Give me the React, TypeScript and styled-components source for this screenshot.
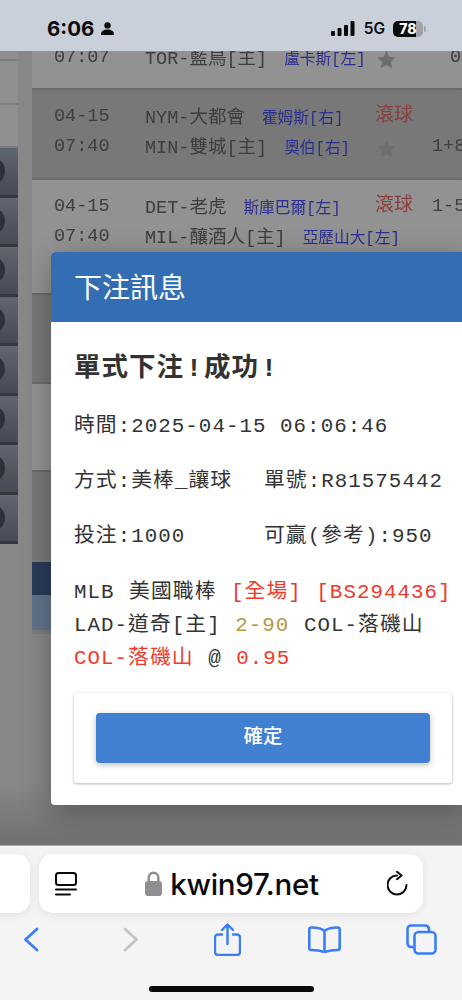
import styled, { createGlobalStyle } from 'styled-components';

const GlobalStyle = createGlobalStyle`
  html, body { margin: 0; padding: 0; background: #f4f4f4; }
  * { box-sizing: border-box; }
`;

const MONO = `"Liberation Mono", "Noto Sans CJK TC", monospace`;

const Screen = styled.div`
  width: 462px;
  height: 1000px;
  display: flex;
  flex-direction: column;
  overflow: hidden;
`;

const StatusBar = styled.div`
  height: 51px;
  flex: none;
  background: #c9d0d9;
  display: flex;
  align-items: center;
  padding: 6px 39px 0 47px;
  color: #0a0a0a;
  font-family: Inter, "Liberation Sans", sans-serif;
`;

const Clock = styled.span`
  font-size: 20.5px;
  font-weight: 700;
  margin-right: 7px;
`;

const StatusRight = styled.div`
  margin-left: auto;
  display: flex;
  align-items: center;
`;

const Net = styled.span`
  font-size: 15.5px;
  font-weight: 600;
  margin: 0 8px 0 9px;
`;

const Battery = styled.div`
  width: 30px;
  height: 16px;
  border-radius: 5px;
  background: linear-gradient(90deg, #0a0a0a 0 78%, #9fa3a9 78%);
  color: #fff;
  font-size: 14px;
  font-weight: 800;
  line-height: 16px;
  text-align: center;
  position: relative;

  &::after {
    content: '';
    position: absolute;
    right: -3px;
    top: 5px;
    width: 2px;
    height: 6px;
    border-radius: 0 2px 2px 0;
    background: #9fa3a9;
  }
`;

const Viewport = styled.div`
  flex: 1;
  position: relative;
  overflow: hidden;
  background: #eaeaea;
`;

const Page = styled.div`
  display: flex;
  align-items: flex-start;
  filter: blur(0.4px);
`;

const Sidebar = styled.div`
  width: 18px;
  flex: none;
  margin-right: 14px;
`;

const SideLink = styled.div<{ $h: number }>`
  height: ${({ $h }) => $h}px;
  background: #f6f6f6;
  border-bottom: 2px solid #d6d6d6;
`;

const SideButton = styled.div`
  height: 49.5px;
  background: linear-gradient(180deg, #a6b0bf, #76808f);
  border-bottom: 3px solid #59616d;
  display: flex;
  align-items: center;
  overflow: hidden;
`;

const SideDot = styled.span`
  width: 28px;
  height: 28px;
  flex: none;
  margin-left: -23px;
  border-radius: 50%;
  background: #4e5662;
`;

const Main = styled.div`
  flex: 1;
  min-width: 0;
`;

const Row = styled.div<{ $h: number; $dark?: boolean; $end?: boolean; $flat?: boolean }>`
  height: ${({ $h }) => $h}px;
  background: ${({ $dark }) => ($dark ? '#cfcfcf' : '#fbfbfb')};
  border-top: ${({ $flat }) => ($flat ? '0' : '2px solid #b8b8b8')};
  padding: ${({ $end }) => ($end ? '0 0 14px 22px' : '14px 0 0 22px')};
  display: flex;
  flex-direction: column;
  justify-content: ${({ $end }) => ($end ? 'flex-end' : 'flex-start')};
  font-family: ${MONO};
  font-size: 18.5px;
  color: #6a6a6a;
`;

const Line = styled.div`
  display: grid;
  grid-template-columns: 91px 230px 57px 1fr;
  height: 29.5px;
  line-height: 29.5px;
  white-space: nowrap;
`;

const Time = styled.span`
  margin-top: -2px;
`;

const Match = styled.span`
  display: flex;
  align-items: baseline;
  gap: 17px;
`;

const Pitcher = styled.span`
  font-size: 15.7px;
  color: #4a50f5;
`;

const Live = styled.span`
  font-size: 19px;
  margin-top: -2px;
  color: #f06a6a;
`;

const Star = styled.svg`
  margin: 5px 0 0 2px;
`;

const Score = styled.span<{ $inset?: number }>`
  margin-top: -2px;
  padding-left: ${({ $inset }) => $inset ?? 0}px;
`;

const Band = styled.div<{ $h: number; $color: string }>`
  height: ${({ $h }) => $h}px;
  background: ${({ $color }) => $color};
`;

const Backdrop = styled.div`
  position: absolute;
  inset: 0;
  background: linear-gradient(180deg, rgba(0, 0, 0, 0.42) 92%, rgba(0, 0, 0, 0.52));
`;

const Modal = styled.div`
  position: absolute;
  top: 201px;
  left: 51px;
  right: -10px;
  background: #fff;
  border-radius: 4px;
  overflow: hidden;
  box-shadow: 0 8px 30px rgba(0, 0, 0, 0.3);
`;

const ModalHeader = styled.div`
  height: 70px;
  background: #346eb2;
  color: #fff;
  padding: 0 0 2px 23px;
  font-family: "Noto Sans CJK TC", sans-serif;
  font-size: 28px;
  line-height: 68px;
`;

const ModalBody = styled.div`
  padding: 25px 0 22px 23px;
  font-family: ${MONO};
  color: #333;
`;

const Title = styled.div`
  font-size: 26.5px;
  font-weight: 700;
  letter-spacing: 1px;
  line-height: 44px;
  margin-bottom: 8px;
`;

const Bang = styled.span`
  margin: 0 1px 0 2px;
`;

const Field = styled.div`
  display: grid;
  grid-template-columns: 190px 1fr;
  height: 55px;
  font-size: 20.8px;
  letter-spacing: 1.05px;
  line-height: 55px;
  white-space: nowrap;
`;

const Details = styled.div`
  margin-top: 12px;
  font-size: 20.8px;
  letter-spacing: 1.05px;
  word-spacing: 1px;
  line-height: 33px;
  white-space: nowrap;
`;

const Red = styled.span`
  color: #f0392b;
`;

const Gold = styled.span`
  color: #b8963e;
`;

const Card = styled.div`
  width: 378px;
  margin-top: 18px;
  padding: 20px 22px;
  background: #fff;
  border-radius: 3px;
  box-shadow: 0 1px 3px rgba(0, 0, 0, 0.3);
`;

const ConfirmButton = styled.button`
  width: 334px;
  height: 50px;
  display: block;
  border: 0;
  padding: 0 0 8px;
  border-radius: 4px;
  background: #4180d0;
  color: #fff;
  font-family: "Noto Sans CJK TC", sans-serif;
  font-size: 19.5px;
  font-weight: 500;
  box-shadow: 0 2px 6px rgba(0, 0, 0, 0.25);
`;

const Toolbar = styled.div`
  height: 155px;
  flex: none;
  background: #f4f4f4;
  border-top: 1px solid #ababab;
  padding-top: 8px;
  display: flex;
  flex-direction: column;
`;

const TabStrip = styled.div`
  display: flex;
  gap: 9px;
  margin-left: -30px;
`;

const SidePill = styled.div`
  width: 60px;
  height: 59px;
  flex: none;
  border-radius: 14px;
  background: #fff;
  box-shadow: 0 2px 10px rgba(0, 0, 0, 0.08);
`;

const AddressPill = styled.div`
  width: 384px;
  height: 59px;
  flex: none;
  border-radius: 14px;
  background: #fff;
  box-shadow: 0 2px 10px rgba(0, 0, 0, 0.08);
  display: flex;
  align-items: center;
  padding: 0 15px 0 16px;
`;

const Address = styled.div`
  flex: 1;
  display: flex;
  align-items: center;
  justify-content: center;
  gap: 8px;
  font-family: Inter, "Liberation Sans", sans-serif;
  font-size: 29.5px;
  font-weight: 500;
  letter-spacing: -0.3px;
  color: #0a0a0a;
`;

const NavRow = styled.div`
  display: grid;
  grid-template-columns: 103px repeat(4, 97px);
  margin: 8px 0 0 -21px;
  justify-items: center;
  align-items: center;
  height: 36px;
`;

const HomeBar = styled.div`
  width: 165px;
  height: 6px;
  margin: 29px 0 0 149px;
  border-radius: 3px;
  background: #0a0a0a;
`;

function RowStar() {
  return (
    <Star width="19" height="19" viewBox="0 0 24 24" fill="#bdbdbd">
      <path d="M12 1l3.4 7.6 8.2.9-6.1 5.5 1.7 8.1L12 19l-7.2 4.1 1.7-8.1L.4 9.5l8.2-.9z" />
    </Star>
  );
}

export default function App() {
  return (
    <Screen>
      <GlobalStyle />
      <StatusBar>
        <Clock>6:06</Clock>
        <svg width="13" height="13" viewBox="0 0 13 13" fill="#0a0a0a">
          <circle cx="6.5" cy="3.4" r="3.2" />
          <path d="M0 12.2c0-3.2 2.6-4.8 6.5-4.8s6.5 1.6 6.5 4.8c0 .5-.3.8-.8.8H.8c-.5 0-.8-.3-.8-.8z" />
        </svg>
        <StatusRight>
          <svg width="24" height="15" viewBox="0 0 24 15" fill="#0a0a0a">
            <rect x="0" y="10" width="4" height="5" rx="1" />
            <rect x="6.5" y="7" width="4" height="8" rx="1" />
            <rect x="13" y="4" width="4" height="11" rx="1" />
            <rect x="19.5" y="0" width="4" height="15" rx="1" />
          </svg>
          <Net>5G</Net>
          <Battery>78</Battery>
        </StatusRight>
      </StatusBar>

      <Viewport>
        <Page>
          <Sidebar>
            <SideLink $h={10} />
            <SideLink $h={44} />
            <SideLink $h={43} />
            {Array.from({ length: 8 }, (_, i) => (
              <SideButton key={i}>
                <SideDot />
              </SideButton>
            ))}
          </Sidebar>
          <Main>
            <Row $h={37} $end $flat>
              <Line>
                <Time>07:07</Time>
                <Match>
                  <span>TOR-藍鳥[主]</span>
                  <Pitcher>盧卡斯[左]</Pitcher>
                </Match>
                <RowStar />
                <Score $inset={18}>0</Score>
              </Line>
            </Row>
            <Row $h={90} $dark>
              <Line>
                <Time>04-15</Time>
                <Match>
                  <span>NYM-大都會</span>
                  <Pitcher>霍姆斯[右]</Pitcher>
                </Match>
                <Live>滾球</Live>
                <Score />
              </Line>
              <Line>
                <Time>07:40</Time>
                <Match>
                  <span>MIN-雙城[主]</span>
                  <Pitcher>奧伯[右]</Pitcher>
                </Match>
                <RowStar />
                <Score>1+8</Score>
              </Line>
            </Row>
            <Row $h={115}>
              <Line>
                <Time>04-15</Time>
                <Match>
                  <span>DET-老虎</span>
                  <Pitcher>斯庫巴爾[左]</Pitcher>
                </Match>
                <Live>滾球</Live>
                <Score>1-5</Score>
              </Line>
              <Line>
                <Time>07:40</Time>
                <Match>
                  <span>MIL-釀酒人[主]</span>
                  <Pitcher>亞歷山大[左]</Pitcher>
                </Match>
              </Line>
            </Row>
            <Row $h={89} $dark />
            <Row $h={88} />
            <Row $h={90} $dark />
            <Band $h={2} $color="#d8d8d8" />
            <Band $h={33} $color="#486599" />
            <Band $h={35} $color="#a9c6ee" />
            <Band $h={4} $color="#d8d8d8" />
          </Main>
        </Page>

        <Backdrop />

        <Modal>
          <ModalHeader>下注訊息</ModalHeader>
          <ModalBody>
            <Title>
              單式下注<Bang>!</Bang>成功<Bang>!</Bang>
            </Title>
            <Field>
              <span>時間:2025-04-15 06:06:46</span>
            </Field>
            <Field>
              <span>方式:美棒_讓球</span>
              <span>單號:R81575442</span>
            </Field>
            <Field>
              <span>投注:1000</span>
              <span>可贏(參考):950</span>
            </Field>
            <Details>
              <div>
                MLB 美國職棒 <Red>[全場] [BS294436]</Red>
              </div>
              <div>
                LAD-道奇[主] <Gold>2-90</Gold> COL-落磯山
              </div>
              <div>
                <Red>COL-落磯山</Red> @ <Red>0.95</Red>
              </div>
            </Details>
            <Card>
              <ConfirmButton>確定</ConfirmButton>
            </Card>
          </ModalBody>
        </Modal>
      </Viewport>

      <Toolbar>
        <TabStrip>
          <SidePill />
          <AddressPill>
            <svg width="22" height="24" viewBox="0 0 22 24" fill="none" stroke="#0a0a0a" strokeWidth="2" strokeLinecap="round">
              <rect x="1" y="1" width="20" height="12" rx="2.5" />
              <path d="M1 17.500h20M1 22.500h14" />
            </svg>
            <Address>
              <svg width="17" height="25" viewBox="0 0 17 25">
                <path d="M3.700 11V6.500a4.800 4.800 0 0 1 9.600 0V11" fill="none" stroke="#8e8e93" strokeWidth="2.4" />
                <rect x="0" y="10" width="17" height="15" rx="3" fill="#8e8e93" />
              </svg>
              kwin97.net
            </Address>
            <svg width="21" height="25" viewBox="0 0 21 25" fill="none" stroke="#0a0a0a" strokeWidth="2" strokeLinecap="round" strokeLinejoin="round">
              <path d="M10 4.500A9.500 9.500 0 1 0 19.500 14" />
              <path d="M10 .8l4.500 3.700L10 8.200" />
            </svg>
          </AddressPill>
        </TabStrip>
        <NavRow>
          <svg width="16" height="25" viewBox="0 0 16 25" fill="none" stroke="#3b7df6" strokeWidth="2.8" strokeLinecap="round" strokeLinejoin="round">
            <path d="M14 2L2.500 12.500 14 23" />
          </svg>
          <svg width="16" height="25" viewBox="0 0 16 25" fill="none" stroke="#c4c4c4" strokeWidth="2.8" strokeLinecap="round" strokeLinejoin="round">
            <path d="M2 2l11.500 10.500L2 23" />
          </svg>
          <svg width="27" height="33" viewBox="0 0 27 33" fill="none" stroke="#3b7df6" strokeWidth="2.4" strokeLinecap="round" strokeLinejoin="round">
            <path d="M8 11.500H4a3 3 0 0 0-3 3V29a3 3 0 0 0 3 3h19a3 3 0 0 0 3-3V14.500a3 3 0 0 0-3-3h-4" />
            <path d="M13.500 21V1.500M8 7l5.500-5.500L19 7" />
          </svg>
          <svg width="33" height="27" viewBox="0 0 33 27" fill="none" stroke="#3b7df6" strokeWidth="2.6" strokeLinecap="round" strokeLinejoin="round">
            <path d="M16.500 5C14 2.500 10 1.500 3.500 1.500 2 1.500 1.300 2.300 1.300 3.500v19c0 1 .7 1.500 2 1.500 6 0 10.200.6 13.200 2.500 3-1.900 7.200-2.500 13.200-2.500 1.300 0 2-.5 2-1.500v-19c0-1.200-.7-2-2.200-2C23 1.500 19 2.500 16.500 5zM16.500 5v21" />
          </svg>
          <svg width="31" height="31" viewBox="0 0 31 31" fill="none" stroke="#3b7df6" strokeWidth="2.6" strokeLinejoin="round">
            <rect x="8.500" y="8" width="21" height="21.500" rx="4" />
            <path d="M8.500 23H5a4 4 0 0 1-3.500-4V5a3.500 3.500 0 0 1 3.500-3.500h14A4 4 0 0 1 23 5v3" />
          </svg>
        </NavRow>
        <HomeBar />
      </Toolbar>
    </Screen>
  );
}
